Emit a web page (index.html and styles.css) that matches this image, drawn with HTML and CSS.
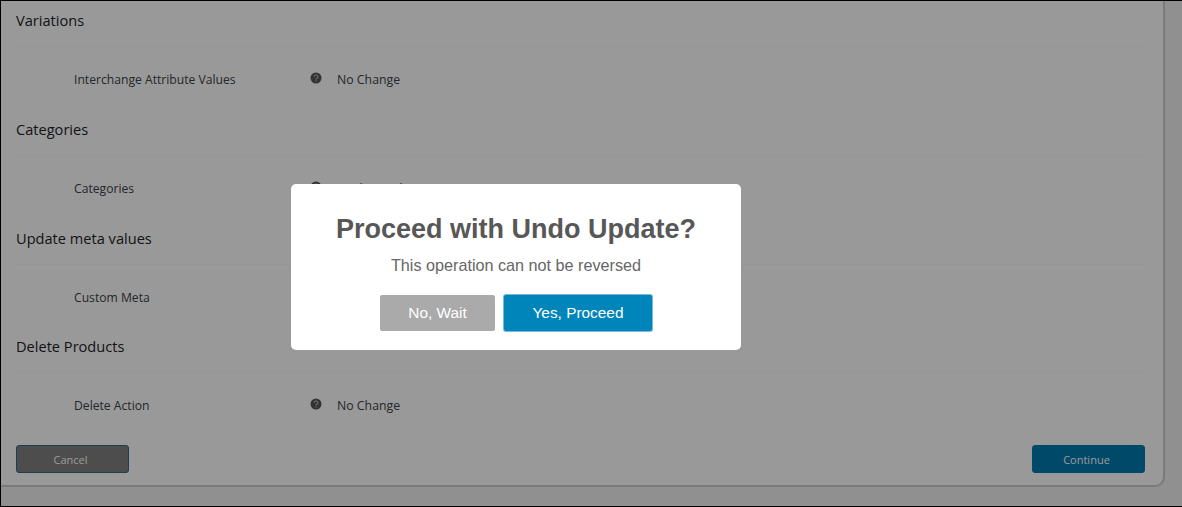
FILE: index.html
```html
<!DOCTYPE html>
<html lang="en">
<head>
    <meta charset="UTF-8">
    <meta name="viewport" content="width=device-width, initial-scale=1.0">
    <title>Bulk Edit</title>
    <link rel="stylesheet" href="styles.css">
</head>
<body>
    <div class="page">
        <div class="panel">
            <section class="group">
                <h2>Variations</h2>
                <div class="row">
                    <span class="row-label">Interchange Attribute Values</span>
                    <svg class="help" viewBox="0 0 12 12"><circle cx="6" cy="6" r="5.5" fill="#555"/><path d="M4.2 4.7a1.8 1.7 0 1 1 2.7 1.5c-.6.3-.9.6-.9 1.2" fill="none" stroke="#aaa" stroke-width="1.3"/><rect x="5.3" y="8.2" width="1.4" height="1.4" fill="#aaa"/></svg>
                    <span class="row-value">No Change</span>
                </div>
            </section>
            <section class="group">
                <h2>Categories</h2>
                <div class="row">
                    <span class="row-label">Categories</span>
                    <svg class="help" viewBox="0 0 12 12"><circle cx="6" cy="6" r="5.5" fill="#555"/><path d="M4.2 4.7a1.8 1.7 0 1 1 2.7 1.5c-.6.3-.9.6-.9 1.2" fill="none" stroke="#aaa" stroke-width="1.3"/><rect x="5.3" y="8.2" width="1.4" height="1.4" fill="#aaa"/></svg>
                    <span class="row-value">Unchanged</span>
                </div>
            </section>
            <section class="group">
                <h2>Update meta values</h2>
                <div class="row">
                    <span class="row-label">Custom Meta</span>
                </div>
            </section>
            <section class="group">
                <h2>Delete Products</h2>
                <div class="row">
                    <span class="row-label">Delete Action</span>
                    <svg class="help" viewBox="0 0 12 12"><circle cx="6" cy="6" r="5.5" fill="#555"/><path d="M4.2 4.7a1.8 1.7 0 1 1 2.7 1.5c-.6.3-.9.6-.9 1.2" fill="none" stroke="#aaa" stroke-width="1.3"/><rect x="5.3" y="8.2" width="1.4" height="1.4" fill="#aaa"/></svg>
                    <span class="row-value">No Change</span>
                </div>
            </section>
            <div class="actions">
                <button class="btn btn-cancel">Cancel</button>
                <button class="btn btn-continue">Continue</button>
            </div>
        </div>
    </div>

    <div class="overlay">
        <div class="modal">
            <h1>Proceed with Undo Update?</h1>
            <p>This operation can not be reversed</p>
            <div class="modal-buttons">
                <button class="modal-btn modal-no">No, Wait</button>
                <button class="modal-btn modal-yes">Yes, Proceed</button>
            </div>
        </div>
    </div>
</body>
</html>
```

FILE: styles.css
```css
html, body {
    margin: 0;
    height: 100%;
    overflow: hidden;
}

body {
    background-color: #000;
    font-family: "Open Sans", "Noto Sans", sans-serif;
    color: #3c434a;
}

.page {
    height: 505px;
    margin: 1px 0 1px 1px;
    background-color: #f0f0f1;
    overflow: hidden;
}

.panel {
    width: 1164px;
    height: 486px;
    box-sizing: border-box;
    padding: 0 18px 0 15px;
    background-color: #fff;
    border-right: 2px solid #ccc;
    border-bottom: 2px solid #ccc;
    border-bottom-right-radius: 10px;
    display: flex;
    flex-direction: column;
}

.group {
    height: 109px;
    flex: none;
}

.group:nth-child(3) {
    height: 108px;
}

.group h2 {
    margin: 0;
    height: 46px;
    padding-top: 9px;
    box-sizing: border-box;
    font-size: 14.6px;
    line-height: 20px;
    font-weight: 500;
    color: #1d2327;
    border-bottom: 1px solid #fafafa;
}

.row {
    display: flex;
    align-items: center;
    height: 28px;
    margin-top: 18px;
    padding-left: 58px;
    font-size: 12.15px;
}

.row-label {
    width: 236px;
}

.row-value {
    font-size: 12.3px;
}

.help {
    width: 12px;
    height: 12px;
    margin-right: 15px;
    margin-top: -2px;
}

.actions {
    display: flex;
    justify-content: space-between;
    margin-top: 9px;
}

.btn {
    width: 113px;
    height: 28px;
    padding: 0 4px 0 0;
    border-radius: 3px;
    font-family: inherit;
    font-size: 11px;
    box-sizing: border-box;
    color: #fff;
}

.btn-cancel {
    background-color: #808080;
    border: 1px solid #2d6a8a;
}

.btn-continue {
    background-color: #007ab0;
    border: 1px solid #007ab0;
}

.overlay {
    position: fixed;
    top: 0;
    left: 0;
    right: 0;
    bottom: 0;
    background-color: rgba(0, 0, 0, .4);
}

/* dialog sits over the page */
.modal {
    position: absolute;
    top: 184px;
    left: 291px;
    width: 450px;
    height: 166px;
    box-sizing: border-box;
    padding-top: 28px;
    background-color: #fff;
    border-radius: 5px;
    text-align: center;
    font-family: "Liberation Sans", Arial, sans-serif;
    color: #575757;
}

.modal h1 {
    margin: 0;
    font-size: 27px;
    line-height: 35px;
    font-weight: 700;
}

.modal p {
    margin: 8px 0 0;
    font-size: 16.2px;
    line-height: 20px;
    color: #666;
}

.modal-buttons {
    display: flex;
    justify-content: center;
    gap: 9px;
    margin-top: 20px;
}

.modal-btn {
    height: 36px;
    border: none;
    border-radius: 2px;
    font-family: inherit;
    font-size: 15.4px;
    color: #fff;
    padding: 0;
}

.modal-no {
    width: 115px;
    background-color: #aaa;
}

.modal-yes {
    width: 148px;
    background-color: #0085ba;
    box-shadow: 0 0 0 1px #7ab8e0;
}
```
